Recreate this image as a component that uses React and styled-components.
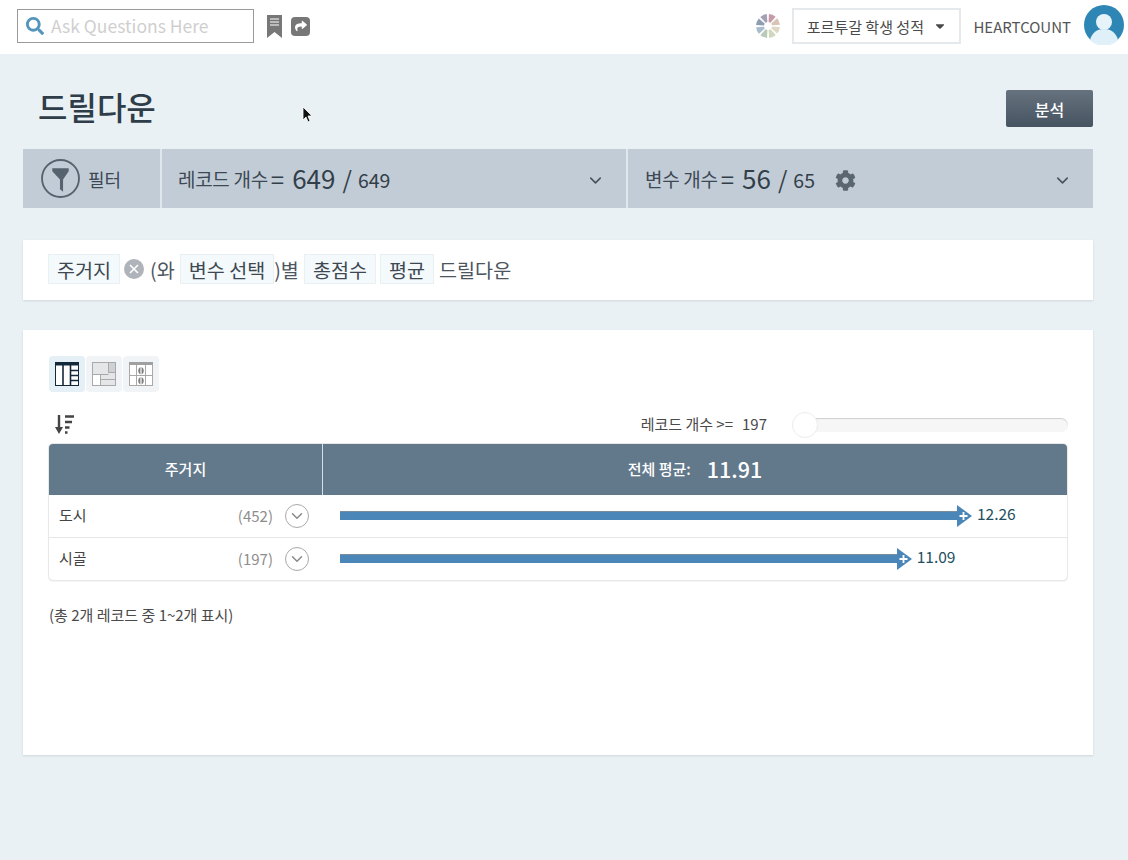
import React from "react";
import styled, { createGlobalStyle } from "styled-components";
import { FaSearch, FaCog, FaCaretDown, FaShare } from "react-icons/fa";
import { FiChevronDown } from "react-icons/fi";

const GlobalStyle = createGlobalStyle`
  html, body { margin: 0; padding: 0; background: #eaf1f4; }
  body {
    font-family: "Noto Sans CJK KR", sans-serif;
    color: #333f48;
    height: 860px;
    overflow: hidden;
  }
  * { box-sizing: border-box; }
`;

const Header = styled.header`
  height: 54px;
  background: #fff;
  display: flex;
  align-items: center;
  padding: 0 4px 2px 17px;
`;
const SearchBox = styled.div`
  width: 237px;
  height: 34px;
  border: 1px solid #9a9a9a;
  display: flex;
  align-items: center;
  padding-left: 8px;
  gap: 7px;
  color: #cfcfcf;
  font-size: 17.5px;
  line-height: 1;
  svg { color: #5495bd; }
`;
const HeaderIcons = styled.div`
  display: flex;
  align-items: center;
  gap: 9px;
  margin-left: 13px;
`;
const ShareIcon = styled.div`
  width: 19px;
  height: 19px;
  border-radius: 4px;
  background: #777;
  color: #fff;
  display: flex;
  align-items: center;
  justify-content: center;
`;
const HeaderRight = styled.div`
  margin-left: auto;
  display: flex;
  align-items: center;
`;
const DataSelect = styled.div`
  width: 169px;
  height: 36px;
  margin-left: 12px;
  border: 2px solid #e6e9eb;
  display: flex;
  align-items: center;
  justify-content: center;
  gap: 9px;
  font-size: 15px;
  color: #4a4a4a;
  background: #fff;
`;
const UserName = styled.span`
  margin-left: 12px;
  font-size: 15px;
  color: #555;
`;
const Avatar = styled.svg`
  margin: -2px 0 0 13px;
  width: 40px;
  height: 40px;
`;

const Main = styled.main`
  position: relative;
  padding: 0 35px 0 23px;
`;
const TitleRow = styled.div`
  height: 95px;
  display: flex;
  align-items: flex-start;
  justify-content: space-between;
  padding: 33px 0 0 15px;
`;
const Title = styled.h1`
  margin: 0;
  font-size: 32px;
  font-weight: 500;
  line-height: 38px;
  color: #2f3d49;
`;
const AnalyzeButton = styled.button`
  width: 87px;
  height: 37px;
  margin-top: 3px;
  border: 0;
  border-radius: 2px;
  background: linear-gradient(#66737f, #465360);
  color: #fff;
  font: 500 16px "Noto Sans CJK KR", sans-serif;
`;
const FilterBar = styled.section`
  height: 59px;
  display: grid;
  grid-template-columns: 137px 1fr 465px;
  column-gap: 2px;
  background: #dfe7ed;
`;
const FilterCell = styled.div`
  background: #c2ccd7;
  display: flex;
  align-items: center;
  padding: 0 21px 0 ${(p) => p.$left || 17}px;
  color: #333f48;
`;
const FilterLabel = styled.span`
  font-size: 18px;
  margin-left: 8px;
  color: #3c4853;
`;
const CountLabel = styled.span`
  font-size: 19px;
  letter-spacing: -0.3px;
  color: #3c4853;
`;
const CountEquals = styled.span`
  font-size: 24px;
  margin: 0 8px 0 3px;
  line-height: 1;
`;
const CountValue = styled.span`
  font-size: 26px;
  line-height: 1;
  margin-bottom: 2px;
  color: #333f48;
`;
const CountSlash = styled.span`
  font-size: 24px;
  line-height: 1;
  margin: 0 6px 0 7px;
`;
const CountTotal = styled.span`
  font-size: 19.5px;
  line-height: 1;
  margin-top: 2px;
`;
const Chevron = styled(FiChevronDown)`
  margin-left: auto;
  color: #47535e;
  margin-top: 3px;
`;
const Gear = styled(FaCog)`
  margin: 3px 0 0 20px;
  color: #5a6670;
`;

const SentenceCard = styled.section`
  height: 60px;
  margin-top: 32px;
  background: #fff;
  box-shadow: 0 1px 2px rgba(90, 110, 125, 0.2);
  display: flex;
  align-items: center;
  padding: 0 25px 2px;
  font-size: 19.6px;
  color: #4c5660;
`;
const Chip = styled.span`
  height: 30px;
  padding: 0 8px;
  margin: 0 ${(p) => p.$gap || 0}px 0 ${(p) => p.$before || 0}px;
  background: #f4f9fb;
  border: 1px solid #e8f0f4;
  display: inline-flex;
  align-items: center;
  color: #3d4852;
  font-size: 19.6px;
`;
const ClearIcon = styled.svg`
  margin: 0 6px 0 4px;
`;

const ResultCard = styled.section`
  height: 425px;
  margin-top: 30px;
  background: #fff;
  box-shadow: 0 1px 2px rgba(90, 110, 125, 0.2);
  padding: 26px 26px 0 26px;
`;
const ViewSwitch = styled.div`
  display: flex;
  gap: 1px;
`;
const ViewButton = styled.div`
  width: 36px;
  height: 36px;
  border-radius: 4px;
  background: ${(p) => (p.$active ? "#e4eff6" : "#f1f4f6")};
  display: flex;
  align-items: center;
  justify-content: center;
`;
const ToolRow = styled.div`
  height: 52px;
  display: flex;
  align-items: center;
  padding: 13px 0 0 6px;
`;
const MinRecord = styled.div`
  margin-left: auto;
  display: flex;
  gap: 9px;
  font-size: 15px;
  color: #4a4a4a;
  margin-right: 36px;
  padding-bottom: 3px;
`;
const Slider = styled.div`
  position: relative;
  width: 265px;
  height: 14px;
  margin-right: -1px;
  background: #f6f6f6;
  border-radius: 7px;
  box-shadow: inset 0 1px 1px rgba(0, 0, 0, 0.16);
`;
const SliderThumb = styled.div`
  position: absolute;
  left: -11px;
  top: -6px;
  width: 26px;
  height: 26px;
  border-radius: 50%;
  background: #fff;
  border: 1px solid #ececec;
`;
const ResultTable = styled.div`
  border-radius: 4px;
  box-shadow: 0 0 0 1px #e8e8e8, 0 1px 2px rgba(0, 0, 0, 0.14);
  overflow: hidden;
`;
const TableHead = styled.div`
  height: 51px;
  display: grid;
  grid-template-columns: 273px 1fr;
  background: #62798b;
  color: #fff;
`;
const HeadCell = styled.div`
  display: flex;
  align-items: center;
  justify-content: center;
  padding-bottom: 2px;
  font-size: 15px;
  font-weight: 500;
  & + & { border-left: 1px solid #d6dfe5; }
`;
const Average = styled.span`
  font-size: 21.5px;
  font-weight: 500;
  margin-left: 16px;
`;
const Row = styled.div`
  height: 42px;
  display: grid;
  grid-template-columns: 273px 1fr;
  & + & { border-top: 1px solid #e6e6e6; height: 43px; }
`;
const NameCell = styled.div`
  display: flex;
  align-items: center;
  padding: 0 13px 0 10px;
  font-size: 15px;
  color: #444;
`;
const NameText = styled.span`
  margin-bottom: 3px;
`;
const RecordCount = styled.span`
  margin: 0 0 1px auto;
  font-size: 15px;
  color: #8d8d8d;
`;
const Expand = styled.div`
  width: 24px;
  height: 24px;
  margin-left: 12px;
  border: 1px solid #a9a9a9;
  border-radius: 50%;
  display: flex;
  align-items: center;
  justify-content: center;
  color: #8a8a8a;
`;
const BarCell = styled.div`
  display: flex;
  align-items: center;
  padding-left: 18px;
`;
const Bar = styled.div`
  position: relative;
  height: 8px;
  background: #4a86b8;
  margin-right: 15px;
  box-shadow: 0 -1px 0 #7a8d9c;
`;
const BarHead = styled.svg`
  position: absolute;
  right: -15px;
  top: -7px;
`;
const BarValue = styled.span`
  margin-left: 5px;
  font-size: 15.5px;
  color: #22505f;
  padding-bottom: 7px;
`;
const Summary = styled.p`
  margin: 24px 0 0;
  font-size: 15px;
  color: #4a4a4a;
`;
const Cursor = styled.svg`
  position: absolute;
  left: 302px;
  top: 52px;
`;

const wheelColors = ["#c79aa8", "#d8c3b6", "#ded9c4", "#cfd8bc", "#b9cbb8", "#a9bccb", "#8f9db3", "#a6a0b5"];

const ColorWheel = () => (
  <svg width="24" height="24" viewBox="-12 -12 24 24">
    {wheelColors.map((color, i) => (
      <path
        key={color}
        d="M-1 -4 L-3.6 -11.4 A12 12 0 0 1 3.6 -11.4 L1 -4 Z"
        fill={color}
        transform={`rotate(${i * 45 + 22})`}
      />
    ))}
  </svg>
);

const BookmarkIcon = () => (
  <svg width="15" height="23" viewBox="0 0 15 23">
    <path d="M0 0h15v23l-7.5-6L0 23z" fill="#777" />
    <path d="M3 4h9M3 7h9M3 10h9" stroke="#fff" strokeWidth="1.2" />
  </svg>
);

const FunnelIcon = () => (
  <svg width="39" height="39" viewBox="0 0 38 38">
    <circle cx="19" cy="19" r="18" fill="none" stroke="#56626d" strokeWidth="1.8" />
    <path d="M11 9h16v3l-5.5 8v12l-3 -2.5v-9.5L11 12z" fill="#56626d" />
  </svg>
);

const TableIcon = () => (
  <svg width="26" height="26" viewBox="0 0 26 26">
    <rect x="1.5" y="1.5" width="23" height="23" fill="#fff" stroke="#14283c" />
    <rect x="1" y="1" width="24" height="3.5" fill="#14283c" />
    <path d="M9 4v21M16.5 4v21M16 9.5h9M16 14.5h9M16 19.5h9" stroke="#14283c" strokeWidth="1.6" />
  </svg>
);

const TreeIcon = () => (
  <svg width="26" height="26" viewBox="0 0 26 26">
    <rect x="1.5" y="1.5" width="23" height="23" fill="#e4e6e7" stroke="#a9a9a9" />
    <rect x="1.5" y="13.5" width="8" height="11" fill="#fff" stroke="#a9a9a9" />
    <rect x="17.5" y="1.5" width="7" height="10" fill="#cfd1d2" stroke="#a9a9a9" />
    <path d="M9 18.5h16M9 13.5h8.5" stroke="#a9a9a9" />
  </svg>
);

const CompareIcon = () => (
  <svg width="26" height="26" viewBox="0 0 26 26">
    <rect x="1.5" y="1.5" width="23" height="23" fill="#fff" stroke="#a9a9a9" />
    <rect x="1" y="1" width="24" height="3" fill="#a0a0a0" />
    <path d="M1 14.5h24M8.5 4v21M17.5 4v21" stroke="#a9a9a9" />
    <path d="M12.4 6a3.4 4 0 0 0 0 7.500zM13.600 6a3.4 4 0 0 1 0 7.500zM12.4 16a3.4 4 0 0 0 0 7.500zM13.600 16a3.4 4 0 0 1 0 7.500z" fill="#7e7e7e" />
  </svg>
);

const SortIcon = () => (
  <svg width="20" height="21" viewBox="0 0 20 21">
    <path d="M4 1v15" stroke="#444" strokeWidth="2.4" />
    <path d="M0 13h8L4 20z" fill="#444" />
    <path d="M10 2.500h9M10 8h7M10 13.500h4.500M10 18.500h2.500" stroke="#444" strokeWidth="2.4" />
  </svg>
);

const rows = [
  { name: "도시", count: 452, value: 12.26 },
  { name: "시골", count: 197, value: 11.09 },
];

const BAR_SCALE = 51.55;

const App = () => (
  <>
    <GlobalStyle />
    <Header>
      <SearchBox>
        <FaSearch size={18} />
        Ask Questions Here
      </SearchBox>
      <HeaderIcons>
        <BookmarkIcon />
        <ShareIcon><FaShare size={12} /></ShareIcon>
      </HeaderIcons>
      <HeaderRight>
        <ColorWheel />
        <DataSelect>
          포르투갈 학생 성적
          <FaCaretDown size={14} />
        </DataSelect>
        <UserName>HEARTCOUNT</UserName>
        <Avatar viewBox="0 0 40 40">
          <circle cx="20" cy="20" r="20" fill="#2e86b5" />
          <circle cx="20" cy="17" r="8" fill="#e6f3fa" />
          <path d="M6 35c2-8 8-11 14-11s12 3 14 11a20 20 0 0 1-28 0z" fill="#e0f0f8" />
        </Avatar>
      </HeaderRight>
    </Header>
    <Main>
      <Cursor width="12" height="18" viewBox="0 0 12 18">
        <path d="M1 1v13l3-3 2 5 2-1-2-5h4z" fill="#111" stroke="#fff" strokeWidth="0.8" />
      </Cursor>
      <TitleRow>
        <Title>드릴다운</Title>
        <AnalyzeButton>분석</AnalyzeButton>
      </TitleRow>
      <FilterBar>
        <FilterCell $left={18}>
          <FunnelIcon />
          <FilterLabel>필터</FilterLabel>
        </FilterCell>
        <FilterCell $left={16}>
          <CountLabel>레코드 개수</CountLabel>
          <CountEquals>=</CountEquals>
          <CountValue>649</CountValue>
          <CountSlash>/</CountSlash>
          <CountTotal>649</CountTotal>
          <Chevron size={19} />
        </FilterCell>
        <FilterCell>
          <CountLabel>변수 개수</CountLabel>
          <CountEquals>=</CountEquals>
          <CountValue>56</CountValue>
          <CountSlash>/</CountSlash>
          <CountTotal>65</CountTotal>
          <Gear size={21} />
          <Chevron size={19} />
        </FilterCell>
      </FilterBar>
      <SentenceCard>
        <Chip>주거지</Chip>
        <ClearIcon width="20" height="20" viewBox="0 0 20 20">
          <circle cx="10" cy="10" r="10" fill="#aeb4b9" />
          <path d="M6 6l8 8M14 6l-8 8" stroke="#fff" strokeWidth="1.6" />
        </ClearIcon>
        (와
        <Chip $before={5}>변수 선택</Chip>
        )별
        <Chip $before={5} $gap={4}>총점수</Chip>
        <Chip $gap={5}>평균</Chip>
        드릴다운
      </SentenceCard>
      <ResultCard>
        <ViewSwitch>
          <ViewButton $active><TableIcon /></ViewButton>
          <ViewButton><TreeIcon /></ViewButton>
          <ViewButton><CompareIcon /></ViewButton>
        </ViewSwitch>
        <ToolRow>
          <SortIcon />
          <MinRecord>
            <span>레코드 개수 &gt;=</span>
            <span>197</span>
          </MinRecord>
          <Slider><SliderThumb /></Slider>
        </ToolRow>
        <ResultTable>
          <TableHead>
            <HeadCell>주거지</HeadCell>
            <HeadCell>
              전체 평균:
              <Average>11.91</Average>
            </HeadCell>
          </TableHead>
          {rows.map((row) => (
            <Row key={row.name}>
              <NameCell>
                <NameText>{row.name}</NameText>
                <RecordCount>({row.count})</RecordCount>
                <Expand><FiChevronDown size={18} /></Expand>
              </NameCell>
              <BarCell>
                <Bar style={{ width: row.value * BAR_SCALE - 15 }}>
                  <BarHead width="15" height="22" viewBox="0 0 15 22">
                    <path d="M0 0l15 11L0 22z" fill="#4a86b8" />
                    <path d="M2.500 11h8M6.500 7v8" stroke="#fff" strokeWidth="1.8" />
                  </BarHead>
                </Bar>
                <BarValue>{row.value}</BarValue>
              </BarCell>
            </Row>
          ))}
        </ResultTable>
        <Summary>(총 2개 레코드 중 1~2개 표시)</Summary>
      </ResultCard>
    </Main>
  </>
);

export default App;
